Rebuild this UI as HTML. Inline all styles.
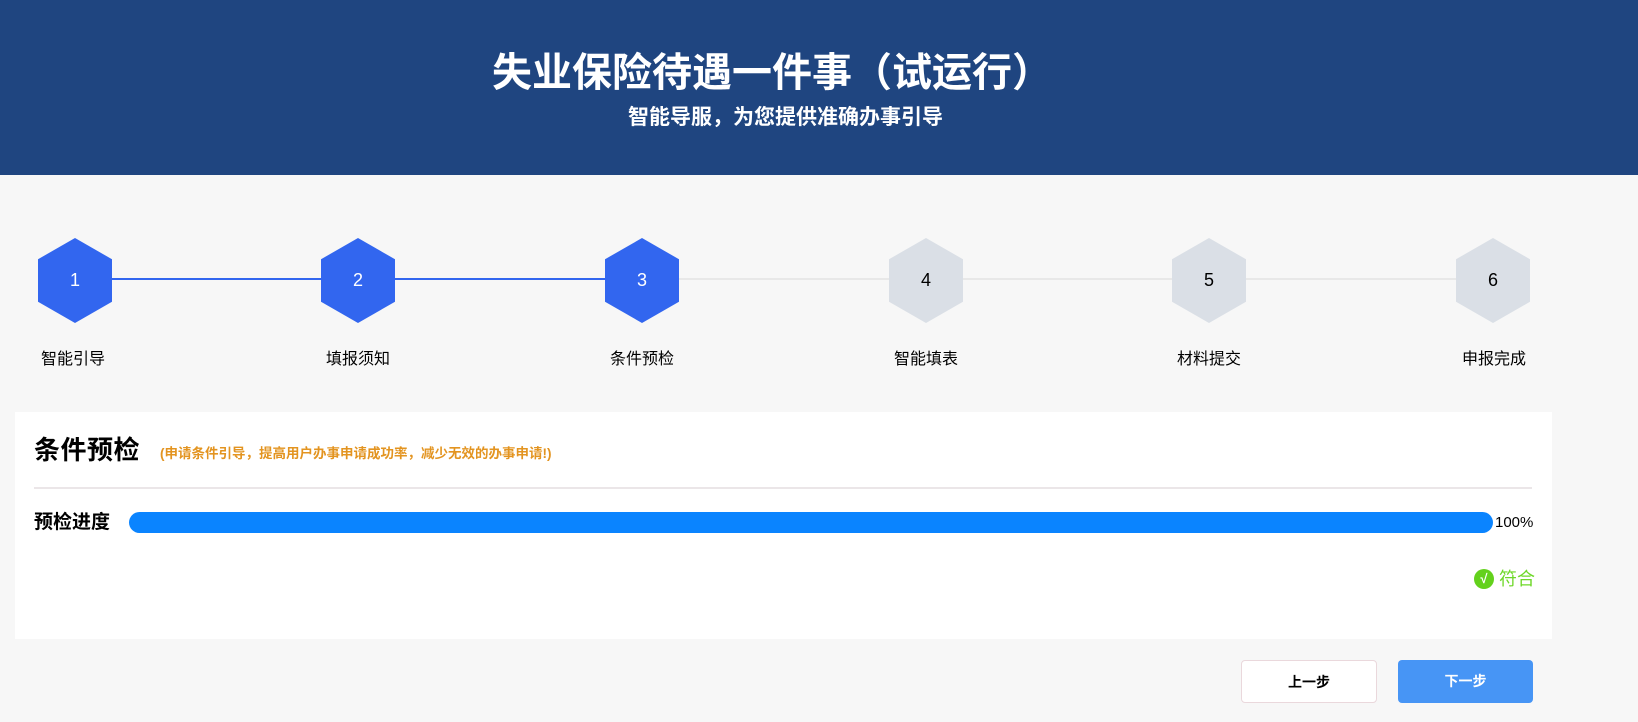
<!DOCTYPE html>
<html><head><meta charset="utf-8"><style>
*{margin:0;padding:0;box-sizing:border-box}
body{width:1638px;height:722px;background:#f7f7f7;font-family:"Liberation Sans","Noto Sans CJK SC",sans-serif;position:relative;overflow:hidden;color:#000}
.hdr{position:absolute;left:0;top:0;width:1638px;height:175px;background:#1f4580;color:#fff;text-align:center}
.t1{position:absolute;left:490px;top:49px;width:564px;font-size:40px;font-weight:bold;line-height:48px;white-space:nowrap;letter-spacing:0}
.t2{position:absolute;left:627px;top:106px;width:317px;font-size:21px;font-weight:bold;line-height:24px;white-space:nowrap}
.line{position:absolute;top:278px;height:2px}
.hex{position:absolute;top:238px;width:74px;height:85px;clip-path:polygon(50% 0,100% 25%,100% 75%,50% 100%,0 75%,0 25%);text-align:center;line-height:85px;font-size:18px}
.on{background:#3266ef;color:#fff}.off{background:#dadfe6;color:#000}
.lbl{position:absolute;top:350px;width:120px;text-align:center;font-size:16px;line-height:20px}
.panel{position:absolute;left:15px;top:412px;width:1537px;height:227px;background:#fff}
.ptitle{position:absolute;left:34px;top:433px;font-size:26px;font-weight:bold;line-height:34px;letter-spacing:0.5px}
.psub{position:absolute;left:160px;top:445px;font-size:13.5px;font-weight:bold;color:#e39420;line-height:18px;white-space:nowrap}
.div{position:absolute;left:34px;top:487px;width:1498px;height:2px;background:#ebe6e8}
.plbl{position:absolute;left:34px;top:510px;font-size:19px;font-weight:bold;line-height:26px}
.bar{position:absolute;left:129px;top:512px;width:1364px;height:21px;border-radius:11px;background:#0a84ff}
.pct{position:absolute;left:1495px;top:513px;font-size:15px;line-height:20px}
.ok{position:absolute;left:1474px;top:569px;width:20px;height:20px;border-radius:50%;background:#63d11c;color:#fff;font-size:13px;text-align:center;line-height:20px;font-weight:bold}
.okt{position:absolute;left:1499px;top:567px;font-size:18px;color:#6fd82a;line-height:24px}
.btn{position:absolute;top:660px;height:43px;border-radius:4px;text-align:center;line-height:43px;font-size:14px;font-weight:bold}
</style></head><body>
<div class="hdr"><div class="t1">失业保险待遇一件事（试运行）</div><div class="t2">智能导服，为您提供准确办事引导</div></div>
<div class="line" style="left:112px;width:530px;background:#3266ef"></div>
<div class="line" style="left:642px;width:851px;background:#e8e8e8"></div>
<div class="hex on" style="left:38px">1</div>
<div class="hex on" style="left:321px">2</div>
<div class="hex on" style="left:605px">3</div>
<div class="hex off" style="left:889px">4</div>
<div class="hex off" style="left:1172px">5</div>
<div class="hex off" style="left:1456px">6</div>
<div class="lbl" style="left:13px">智能引导</div>
<div class="lbl" style="left:298px">填报须知</div>
<div class="lbl" style="left:582px">条件预检</div>
<div class="lbl" style="left:866px">智能填表</div>
<div class="lbl" style="left:1149px">材料提交</div>
<div class="lbl" style="left:1434px">申报完成</div>
<div class="panel"></div>
<div class="ptitle">条件预检</div>
<div class="psub">(申请条件引导，提高用户办事申请成功率，减少无效的办事申请!)</div>
<div class="div"></div>
<div class="plbl">预检进度</div>
<div class="bar"></div>
<div class="pct">100%</div>
<div class="ok">√</div>
<div class="okt">符合</div>
<div class="btn" style="left:1241px;width:136px;background:#fff;border:1px solid #ead8dc">上一步</div>
<div class="btn" style="left:1398px;width:135px;background:#4795f5;color:#fff">下一步</div>
</body></html>
